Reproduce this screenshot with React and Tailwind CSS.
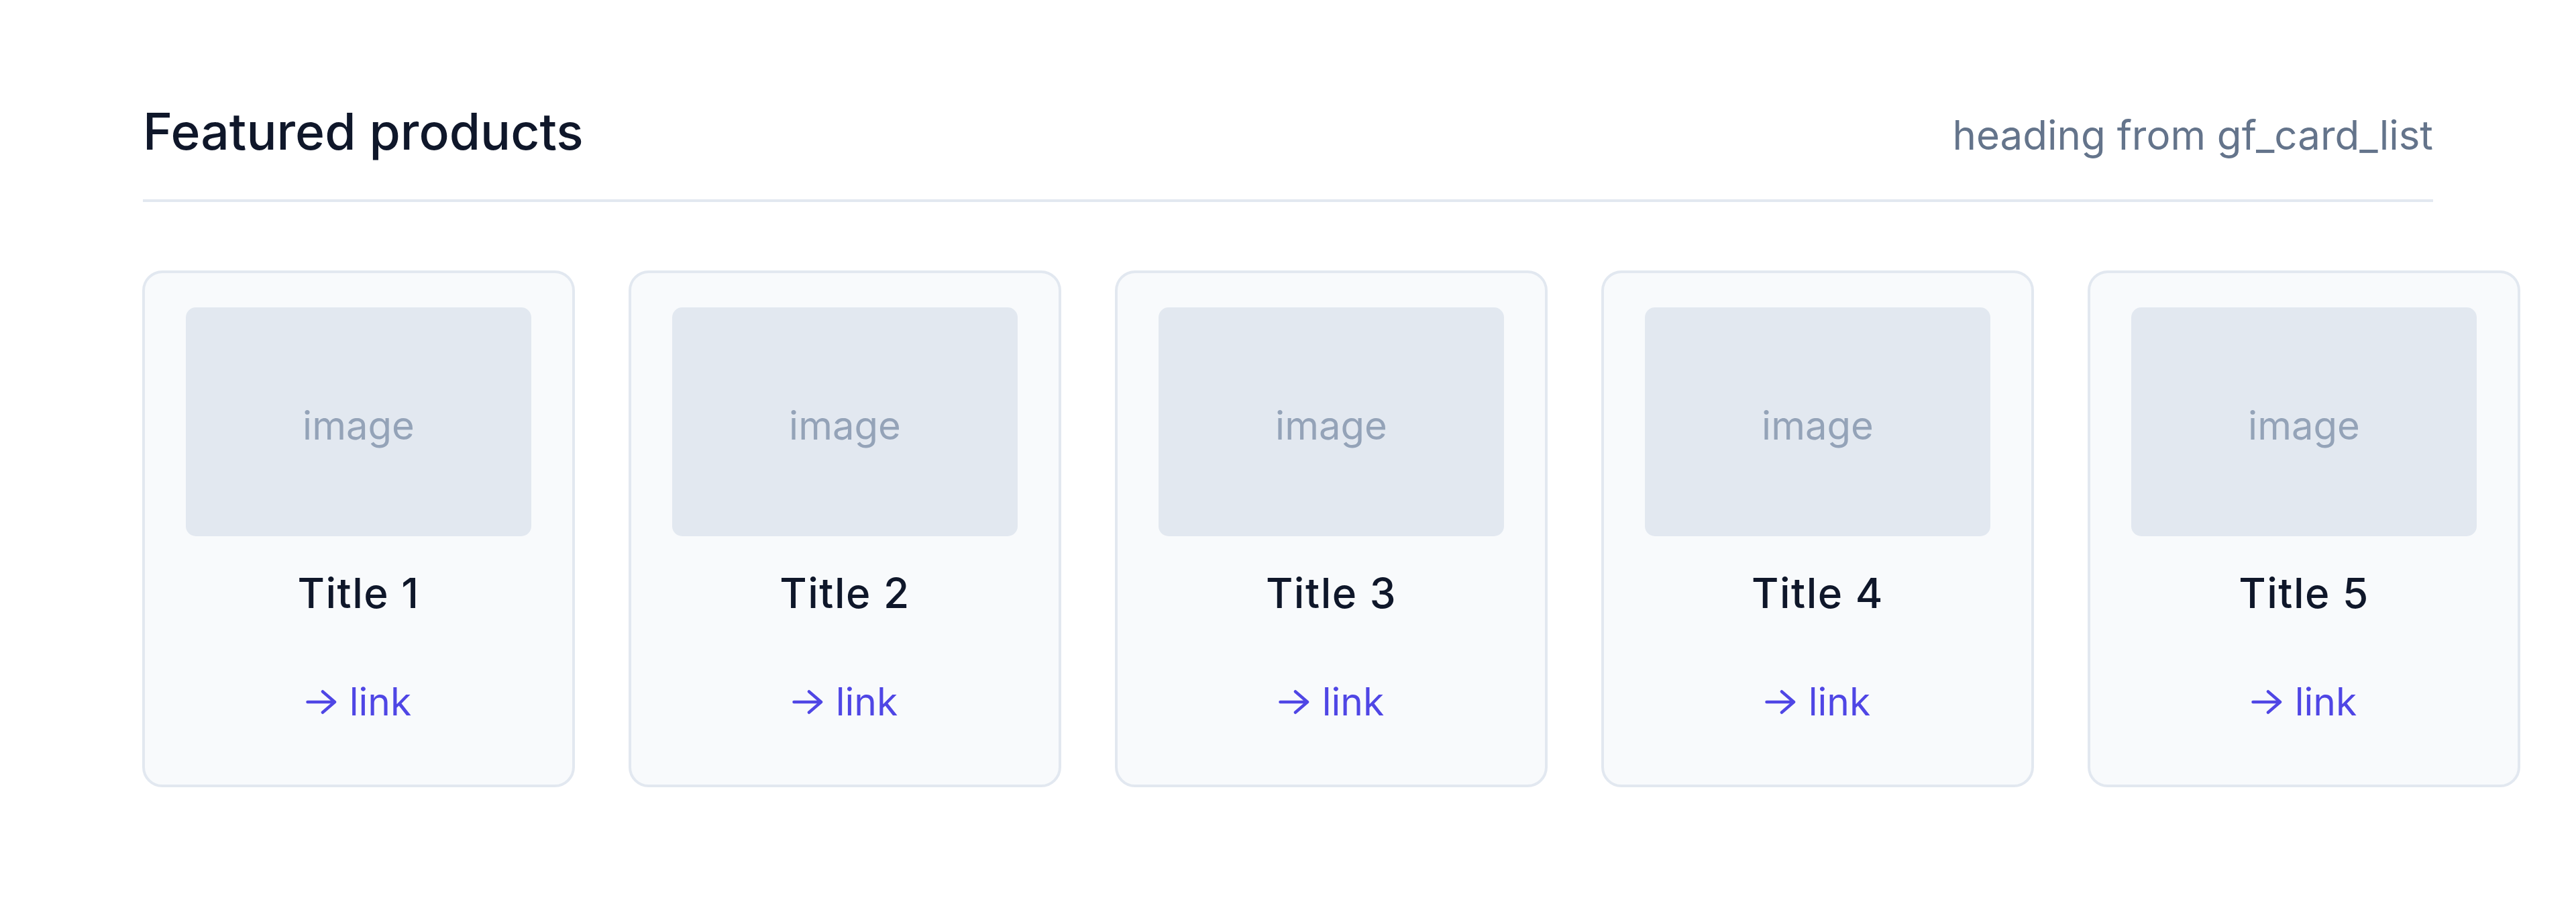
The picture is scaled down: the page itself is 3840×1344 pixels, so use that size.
import React from "react";

const cards = [1, 2, 3, 4, 5].map((n) => ({ id: n, title: `Title ${n}` }));

function Arrow() {
  return (
    <svg width="46" height="38" viewBox="0 0 46 38" fill="none" className="shrink-0">
      <path
        d="M2.5 19H43M25 3.5L43 19L25 34.5"
        stroke="currentColor"
        strokeWidth="4.5"
        strokeLinecap="round"
        strokeLinejoin="round"
      />
    </svg>
  );
}

function Card({ title }) {
  return (
    <div className="w-[645px] shrink-0 rounded-[30px] border-[4px] border-[#e2e8f0] bg-[#f8fafc] px-[61px] pt-[51px] pb-[88px] flex flex-col items-center">
      <div className="w-full h-[341px] pt-[10px] rounded-[15px] bg-[#e2e8f0] flex items-center justify-center text-[58px] leading-none text-[#94a3b8]">
        image
      </div>
      <div className="mt-[47px] text-[62px] leading-[75px] tracking-[1.5px] font-medium text-[#0f172a]">
        {title}
      </div>
      <a
        href="#"
        className="mt-[89px] inline-flex items-center gap-[19px] text-[57px] leading-[71px] text-[#4f46e5]"
      >
        <Arrow />
        <span>link</span>
      </a>
    </div>
  );
}

export default function App() {
  return (
    <div
      className="min-h-[1344px] bg-white overflow-hidden"
      style={{ fontFamily: "Inter, 'Noto Sans', sans-serif" }}
    >
      <section className="px-[213px] pt-[151px]">
        {/* --- heading --- */}
        <div className="flex items-baseline justify-between border-b-[4px] border-[#e2e8f0] pb-[56px]">
          <h2 className="text-[75px] leading-[90px] font-medium text-[#0f172a]">
            Featured products
          </h2>
          <span className="text-[60px] leading-none text-[#64748b]">heading from gf_card_list</span>
        </div>

        {/* --- cards --- */}
        <div className="mt-[102px] -ml-[1px] flex gap-[80px]">
          {cards.map((c) => (
            <Card key={c.id} title={c.title} />
          ))}
        </div>
      </section>
    </div>
  );
}
